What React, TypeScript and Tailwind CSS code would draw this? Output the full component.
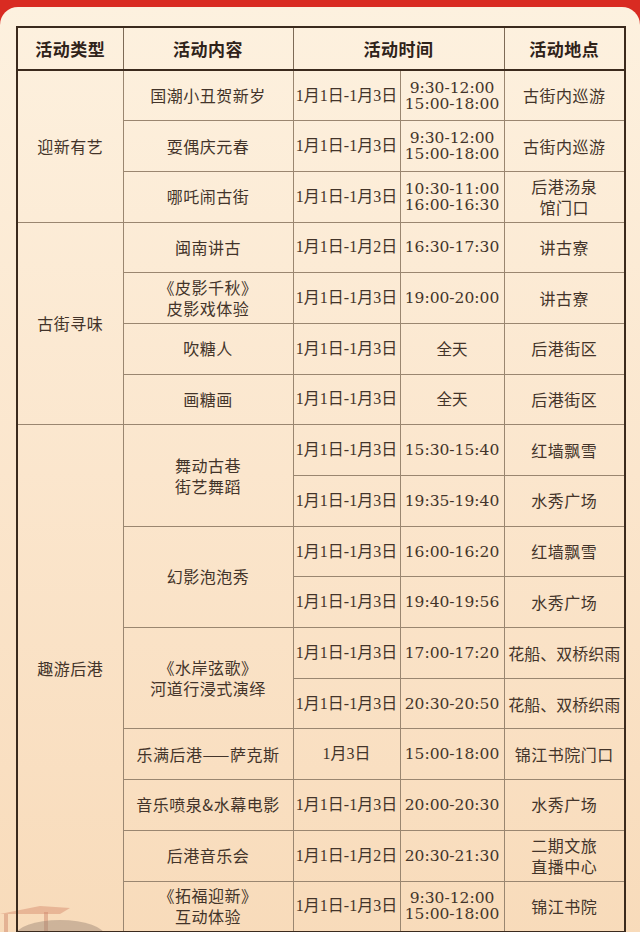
import type { ReactNode } from 'react'

const line = 'border border-[#9a8670]'
const cjk = "font-['Noto_Sans_CJK_SC',sans-serif]"

function Text({ children, rowSpan }: { children: ReactNode; rowSpan?: number }) {
  return (
    <td
      rowSpan={rowSpan}
      className={`${line} p-0 text-center align-middle text-[16px] leading-[21px] tracking-[0.5px] text-[#43342a] ${cjk}`}
    >
      {children}
    </td>
  )
}

function DateCell({ children }: { children: ReactNode }) {
  return (
    <td className="border border-[#9a8670] p-0 text-center align-middle text-[16px] text-[#43342a] font-['Liberation_Serif','Noto_Sans_CJK_SC',serif]">
      {children}
    </td>
  )
}

function TimeCell({ children }: { children: ReactNode }) {
  return (
    <td className="border border-[#9a8670] p-0 text-center align-middle text-[15.5px] leading-[16px] text-[#43342a] font-['DejaVu_Serif','Noto_Sans_CJK_SC',serif]">
      {children}
    </td>
  )
}

function Row({ children }: { children: ReactNode }) {
  return <tr className="h-[50.7px]">{children}</tr>
}

export default function App() {
  return (
    <div className="w-[640px] h-[932px] overflow-hidden bg-[#d92b22]">
      <div className="relative mt-[7px] h-full rounded-t-[18px] bg-gradient-to-b from-[#fdf1df] via-[#fbe6cd] to-[#f8dbba] pt-[19px] pl-[16px]">
        {/* faint pavilion behind the bottom-left corner */}
        <svg className="absolute left-0 bottom-[7px] opacity-60" width="130" height="40" viewBox="0 0 130 40">
          <path d="M0 22 L40 14 L70 16 L60 22 Z" fill="#c86a4e" opacity="0.55" />
          <rect x="4" y="22" width="4" height="18" fill="#b5533c" opacity="0.5" />
          <rect x="44" y="20" width="4" height="20" fill="#b5533c" opacity="0.5" />
          <ellipse cx="60" cy="44" rx="45" ry="16" fill="#5a4a44" opacity="0.45" />
        </svg>

        <table className="relative w-[608px] table-fixed border-collapse border-2 border-[#3b2a1d]">
          <colgroup>
            <col className="w-[106px]" />
            <col className="w-[170px]" />
            <col className="w-[107px]" />
            <col className="w-[104px]" />
            <col className="w-[121px]" />
          </colgroup>
          <thead>
            <tr className="h-[43px]">
              <th className={`border border-[#7d6a56] border-b-2 border-b-[#3b2a1d] text-[17px] font-bold text-[#2f2219] tracking-[0.5px] ${cjk}`}>活动类型</th>
              <th className={`border border-[#7d6a56] border-b-2 border-b-[#3b2a1d] text-[17px] font-bold text-[#2f2219] tracking-[0.5px] ${cjk}`}>活动内容</th>
              <th colSpan={2} className={`border border-[#7d6a56] border-b-2 border-b-[#3b2a1d] text-[17px] font-bold text-[#2f2219] tracking-[0.5px] ${cjk}`}>活动时间</th>
              <th className={`border border-[#7d6a56] border-b-2 border-b-[#3b2a1d] text-[17px] font-bold text-[#2f2219] tracking-[0.5px] ${cjk}`}>活动地点</th>
            </tr>
          </thead>
          <tbody>
            <Row>
              <Text rowSpan={3}>迎新有艺</Text>
              <Text>国潮小丑贺新岁</Text>
              <DateCell>1月1日-1月3日</DateCell>
              <TimeCell>9:30-12:00<br />15:00-18:00</TimeCell>
              <Text>古街内巡游</Text>
            </Row>
            <Row>
              <Text>耍偶庆元春</Text>
              <DateCell>1月1日-1月3日</DateCell>
              <TimeCell>9:30-12:00<br />15:00-18:00</TimeCell>
              <Text>古街内巡游</Text>
            </Row>
            <Row>
              <Text>哪吒闹古街</Text>
              <DateCell>1月1日-1月3日</DateCell>
              <TimeCell>10:30-11:00<br />16:00-16:30</TimeCell>
              <Text>后港汤泉<br />馆门口</Text>
            </Row>

            <Row>
              <Text rowSpan={4}>古街寻味</Text>
              <Text>闽南讲古</Text>
              <DateCell>1月1日-1月2日</DateCell>
              <TimeCell>16:30-17:30</TimeCell>
              <Text>讲古寮</Text>
            </Row>
            <Row>
              <Text>《皮影千秋》<br />皮影戏体验</Text>
              <DateCell>1月1日-1月3日</DateCell>
              <TimeCell>19:00-20:00</TimeCell>
              <Text>讲古寮</Text>
            </Row>
            <Row>
              <Text>吹糖人</Text>
              <DateCell>1月1日-1月3日</DateCell>
              <TimeCell><span className={cjk}>全天</span></TimeCell>
              <Text>后港街区</Text>
            </Row>
            <Row>
              <Text>画糖画</Text>
              <DateCell>1月1日-1月3日</DateCell>
              <TimeCell><span className={cjk}>全天</span></TimeCell>
              <Text>后港街区</Text>
            </Row>

            <Row>
              <td rowSpan={10} className={`${line} p-0 pb-[20px] text-center align-middle text-[16px] tracking-[0.5px] text-[#43342a] ${cjk}`}>
                趣游后港
              </td>
              <Text rowSpan={2}>舞动古巷<br />街艺舞蹈</Text>
              <DateCell>1月1日-1月3日</DateCell>
              <TimeCell>15:30-15:40</TimeCell>
              <Text>红墙飘雪</Text>
            </Row>
            <Row>
              <DateCell>1月1日-1月3日</DateCell>
              <TimeCell>19:35-19:40</TimeCell>
              <Text>水秀广场</Text>
            </Row>
            <Row>
              <Text rowSpan={2}>幻影泡泡秀</Text>
              <DateCell>1月1日-1月3日</DateCell>
              <TimeCell>16:00-16:20</TimeCell>
              <Text>红墙飘雪</Text>
            </Row>
            <Row>
              <DateCell>1月1日-1月3日</DateCell>
              <TimeCell>19:40-19:56</TimeCell>
              <Text>水秀广场</Text>
            </Row>
            <Row>
              <Text rowSpan={2}>《水岸弦歌》<br />河道行浸式演绎</Text>
              <DateCell>1月1日-1月3日</DateCell>
              <TimeCell>17:00-17:20</TimeCell>
              <td className={`${line} p-0 text-center align-middle text-[16px] tracking-[0px] text-[#43342a] whitespace-nowrap ${cjk}`}>花船、双桥织雨</td>
            </Row>
            <Row>
              <DateCell>1月1日-1月3日</DateCell>
              <TimeCell>20:30-20:50</TimeCell>
              <td className={`${line} p-0 text-center align-middle text-[16px] tracking-[0px] text-[#43342a] whitespace-nowrap ${cjk}`}>花船、双桥织雨</td>
            </Row>
            <Row>
              <Text>乐满后港——萨克斯</Text>
              <DateCell>1月3日</DateCell>
              <TimeCell>15:00-18:00</TimeCell>
              <Text>锦江书院门口</Text>
            </Row>
            <Row>
              <Text>音乐喷泉&amp;水幕电影</Text>
              <DateCell>1月1日-1月3日</DateCell>
              <TimeCell>20:00-20:30</TimeCell>
              <Text>水秀广场</Text>
            </Row>
            <Row>
              <Text>后港音乐会</Text>
              <DateCell>1月1日-1月2日</DateCell>
              <TimeCell>20:30-21:30</TimeCell>
              <Text>二期文旅<br />直播中心</Text>
            </Row>
            <Row>
              <Text>《拓福迎新》<br />互动体验</Text>
              <DateCell>1月1日-1月3日</DateCell>
              <TimeCell>9:30-12:00<br />15:00-18:00</TimeCell>
              <Text>锦江书院</Text>
            </Row>
          </tbody>
        </table>
      </div>
    </div>
  )
}
